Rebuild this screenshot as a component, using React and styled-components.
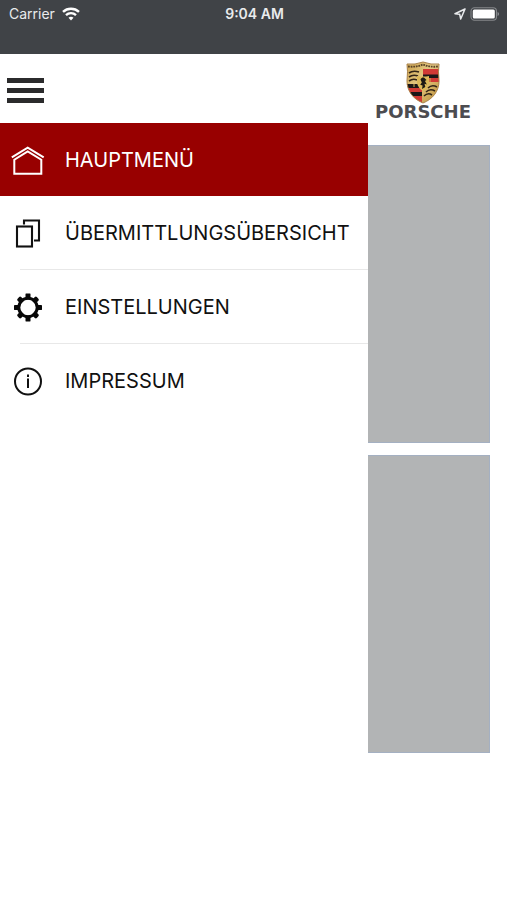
import React from "react";
import styled, { createGlobalStyle } from "styled-components";

const GlobalStyle = createGlobalStyle`
  * { box-sizing: border-box; }
  body {
    margin: 0;
    background: #fff;
    color: #111;
    font-family: Inter, "Liberation Sans", sans-serif;
  }
`;

const Screen = styled.div`
  display: flex;
  flex-direction: column;
  min-height: 100vh;
`;

const StatusBar = styled.div`
  display: grid;
  grid-template-columns: 1fr auto 1fr;
  align-items: start;
  height: 54px;
  padding: 4px 7px 0 9px;
  background: #404347;
  color: #e9ebed;
  font-size: 14px;
  line-height: 20px;
`;

const StatusGroup = styled.div`
  display: flex;
  align-items: center;
  justify-content: ${({ $end }) => ($end ? "flex-end" : "flex-start")};
  gap: ${({ $end }) => ($end ? "4px" : "7px")};
  height: 20px;
`;

const Clock = styled.time`
  font-weight: 600;
`;

const Header = styled.header`
  display: flex;
  align-items: center;
  justify-content: space-between;
  height: 69px;
  padding: 3px 28px 0 7px;
`;

const MenuButton = styled.button`
  display: flex;
  flex-direction: column;
  gap: 5px;
  width: 37px;
  padding: 0;
  border: 0;
  background: none;
  cursor: pointer;
`;

const MenuBar = styled.span`
  width: 100%;
  height: 5px;
  background: #2b2b2c;
`;

const Brand = styled.div`
  display: flex;
  flex-direction: column;
  align-items: center;
  width: 112px;
`;

const Wordmark = styled.span`
  font-family: "DejaVu Sans", sans-serif;
  font-size: 18px;
  font-weight: 700;
  line-height: 16px;
  color: #4c4c50;
`;

const Body = styled.div`
  position: relative;
  flex: 1;
`;

const Drawer = styled.nav`
  position: absolute;
  top: 0;
  bottom: 0;
  left: 0;
  width: 368px;
  max-width: 80%;
  background: #fff;
`;

const MenuList = styled.ul`
  margin: 0;
  padding: 0;
  list-style: none;
`;

const MenuItem = styled.li`
  background: ${({ $active }) => ($active ? "#980000" : "transparent")};
  color: ${({ $active }) => ($active ? "#fff" : "#111")};

  &:not(:first-child):not(:last-child)::after {
    content: "";
    display: block;
    height: 1px;
    margin-left: 20px;
    background: #e8e8e8;
  }
`;

const MenuLink = styled.a`
  display: flex;
  align-items: center;
  gap: 20px;
  height: 73px;
  padding-top: 1px;
  padding-left: 10px;
  color: inherit;
  font-size: 20px;
  line-height: 24px;
  text-decoration: none;
  white-space: nowrap;

  svg { flex: none; }
`;

const Tiles = styled.main`
  display: flex;
  flex-direction: column;
  gap: 12px;
  padding: 22px 17px;
`;

const Tile = styled.section`
  height: 298px;
  border: 1px solid #a4b0c2;
  background: #b2b4b5;
`;

const WifiIcon = () => (
  <svg width="18" height="14" viewBox="0 0 18 14" fill="none" stroke="#fff" strokeWidth="2.4" aria-hidden="true">
    <path d="M1 4.9C5.5.7 12.5.7 17 4.9" />
    <path d="M4 8.1c2.8-2.6 7.2-2.6 10 0" />
    <path d="M6.5 10.7c1.4-1.4 3.6-1.4 5 0L9 13.4z" fill="#fff" stroke="none" />
  </svg>
);

const LocationIcon = () => (
  <svg width="12" height="12" viewBox="0 0 12 12" fill="none" stroke="#e9ebed" strokeWidth="1.5" strokeLinejoin="round" aria-hidden="true">
    <path d="M11 1 1 5.8l4.7.5L6.7 11z" />
  </svg>
);

const BatteryIcon = () => (
  <svg width="30" height="14" viewBox="0 0 30 14" aria-hidden="true">
    <rect x="1" y=".8" width="25.5" height="12.4" rx="3.5" fill="none" stroke="#85888b" strokeWidth="1.1" />
    <rect x="2.8" y="2.5" width="22" height="9" rx="1.5" fill="#fff" />
    <path d="M27.6 5c1.8.6 1.8 3.4 0 4z" fill="#96999c" />
  </svg>
);

const HomeIcon = () => (
  <svg width="35" height="35" viewBox="0 0 35 35" fill="none" stroke="#fff" strokeWidth="2" aria-hidden="true">
    <path d="M1.8 14.4 17.7 4.6l16 9.8" />
    <path d="M4.3 30.7V16.7L17.7 8.4l13.6 8.3v14z" />
  </svg>
);

const CopyIcon = () => (
  <svg width="35" height="35" viewBox="0 0 35 35" fill="none" stroke="#111" strokeWidth="2.1" aria-hidden="true">
    <rect x="7" y="10.5" width="15" height="20" />
    <path d="M14 8.5v-4h15v20h-5" />
  </svg>
);

const GearIcon = () => (
  <svg width="35" height="35" viewBox="0 0 35 35" fill="#080808" aria-hidden="true">
    {[0, 45, 90, 135, 180, 225, 270, 315].map((angle) => (
      <rect
        key={angle}
        x={15.5}
        y={angle % 90 ? 3.9 : 3.5}
        width="5"
        height="6"
        rx={angle % 90 ? 1.4 : 0.4}
        transform={`rotate(${angle} 18 17.5)`}
      />
    ))}
    <circle cx="18" cy="17.5" r="9.2" fill="none" stroke="#080808" strokeWidth="3" />
  </svg>
);

const InfoIcon = () => (
  <svg width="35" height="35" viewBox="0 0 35 35" fill="none" stroke="#111" strokeWidth="2" aria-hidden="true">
    <circle cx="18" cy="17.5" r="13" />
    <path d="M18 14.6v9.4M18 10.6v2.4" />
  </svg>
);

const Crest = () => (
  <svg width="34" height="43" viewBox="0 0 34 43" aria-hidden="true">
    <defs>
      <linearGradient id="gold" x2="1" y2="1">
        <stop stopColor="#caa04a" />
        <stop offset=".45" stopColor="#e4c984" />
        <stop offset="1" stopColor="#b98b32" />
      </linearGradient>
      <clipPath id="shield">
        <path d="M1 3Q9 4 17 1q8 3 16 2-1 7 0 17c0 10-6 18-16 22C7 38 1 30 1 20Q2 10 1 3z" />
      </clipPath>
    </defs>
    <g clipPath="url(#shield)">
      <path d="M0 0h34v43H0z" fill="url(#gold)" />
      <path d="M17 8h17v13H17zM0 23h16v19H0z" fill="#d13a35" />
      <path d="M17 13.5h17v3.5H17zM0 23h15v4H0zM2 31h14v4H2z" fill="#1c1718" />
      <path d="M24 17v4M8 23v3" stroke="#d5ad51" strokeWidth="1" />
      <path
        d="M3 12q4-3 10-1M3 16q4-3 9-1M3 20q4-3 8-1M22 27q4-4 9-1M20 31q4-4 9-1M18 35q4-4 8-1"
        fill="none"
        stroke="#322517"
        strokeWidth="1.6"
      />
      <path d="M2 5.5q8 1 15-2 7 3 15 2" fill="none" stroke="#5a4427" strokeWidth="1.8" strokeDasharray="1.8 .8" />
      <path d="M11 15q6 1 12 0v7q-1 5-6 8-5-3-6-8z" fill="#ddb959" />
      <path d="M14.5 18.5c1-2 3-2.5 4-1.5l2 2-1.5 1 1.8 3.4-2.3-.6.8 3.2-3.3 2 .6-3.6-2.4-.6 1.6-2.2z" fill="#1d1914" />
    </g>
    <path
      d="M1 3Q9 4 17 1q8 3 16 2-1 7 0 17c0 10-6 18-16 22C7 38 1 30 1 20Q2 10 1 3z"
      fill="none"
      stroke="#aa8248"
    />
  </svg>
);

const menu = [
  { label: "HAUPTMENÜ", Icon: HomeIcon, active: true },
  { label: "ÜBERMITTLUNGSÜBERSICHT", Icon: CopyIcon },
  { label: "EINSTELLUNGEN", Icon: GearIcon },
  { label: "IMPRESSUM", Icon: InfoIcon },
];

export default function App() {
  return (
    <Screen>
      <GlobalStyle />
      <StatusBar>
        <StatusGroup>
          <span>Carrier</span>
          <WifiIcon />
        </StatusGroup>
        <Clock>9:04 AM</Clock>
        <StatusGroup $end>
          <LocationIcon />
          <BatteryIcon />
        </StatusGroup>
      </StatusBar>
      <Header>
        <MenuButton type="button" aria-label="Menü" aria-expanded="true">
          <MenuBar />
          <MenuBar />
          <MenuBar />
        </MenuButton>
        <Brand>
          <Crest />
          <Wordmark>PORSCHE</Wordmark>
        </Brand>
      </Header>
      <Body>
        <Tiles>
          <Tile />
          <Tile />
        </Tiles>
        <Drawer>
          <MenuList>
            {menu.map(({ label, Icon, active }) => (
              <MenuItem key={label} $active={active}>
                <MenuLink href="#" aria-current={active ? "page" : undefined}>
                  <Icon />
                  {label}
                </MenuLink>
              </MenuItem>
            ))}
          </MenuList>
        </Drawer>
      </Body>
    </Screen>
  );
}
